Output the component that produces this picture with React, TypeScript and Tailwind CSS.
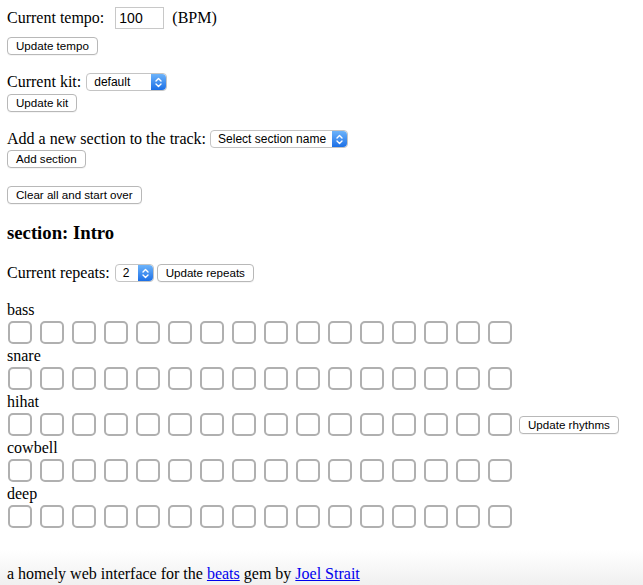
import React from 'react';

const serif = "font-['Liberation_Serif','Times_New_Roman',serif] text-[16px] leading-[18px] text-black";
const btn =
  "block h-[18px] px-[8px] rounded-[4px] border border-[#b8b8b8] bg-white font-['Liberation_Sans',Arial,sans-serif] text-[11.6px] leading-none text-black shadow-[0_1px_0_rgba(0,0,0,0.04)]";

function Stepper() {
  return (
    <span className="flex h-full w-[15px] items-center justify-center rounded-r-[4px] bg-linear-to-b from-[#6cb3fa] to-[#1a6fe6]">
      <svg width="7" height="11" viewBox="0 0 7 11" fill="none" stroke="white" strokeWidth="1.4" strokeLinecap="round" strokeLinejoin="round">
        <path d="M1 4 L3.5 1.5 L6 4" />
        <path d="M1 7 L3.5 9.5 L6 7" />
      </svg>
    </span>
  );
}

function Select({ label, width }: { label: string; width: string }) {
  return (
    <span
      className={`inline-flex h-[18px] items-center justify-between rounded-[4px] border border-[#c4c4c4] bg-white font-['Liberation_Sans',Arial,sans-serif] text-[12px] text-black ${width}`}
    >
      <span className="pl-[7px]">{label}</span>
      <Stepper />
    </span>
  );
}

function Box() {
  return <input type="checkbox" className="h-[23px] w-[24px] appearance-none rounded-[5px] border-2 border-[#b0b0b0] bg-white" />;
}

const tracks = ['bass', 'snare', 'hihat', 'cowbell', 'deep'];

export default function App() {
  return (
    <div className="min-h-screen bg-[linear-gradient(to_bottom,#ffffff_94%,#f0f0f0)] pl-[7px] pt-[7px]">
      <div className="flex h-[22px] items-center">
        <span className={serif}>Current tempo:</span>
        <input
          defaultValue="100"
          className="ml-[11px] h-[22px] w-[49px] border border-[#c8c8c8] pl-[3px] font-['Liberation_Sans',Arial,sans-serif] text-[14px] text-black outline-none"
        />
        <span className={`${serif} ml-[8px]`}>(BPM)</span>
      </div>
      <button className={`${btn} mt-[8px]`}>Update tempo</button>

      <div className="mt-[18px] flex h-[18px] items-center gap-[5px]">
        <span className={serif}>Current kit:</span>
        <Select label="default" width="w-[81px]" />
      </div>
      <button className={`${btn} mt-[3px]`}>Update kit</button>

      <div className="mt-[18px] flex h-[18px] items-center gap-[4px]">
        <span className={serif}>Add a new section to the track:</span>
        <Select label="Select section name" width="w-[138px]" />
      </div>
      <button className={`${btn} mt-[2px]`}>Add section</button>

      <button className={`${btn} mt-[18px]`}>Clear all and start over</button>

      <h3 className="mt-[18px] font-['Liberation_Serif','Times_New_Roman',serif] text-[18.72px] font-bold leading-[22px] text-black">
        section: Intro
      </h3>

      <div className="mt-[20px] flex h-[18px] items-center">
        <span className={serif}>Current repeats:</span>
        <span className="ml-[5px] flex">
          <Select label="2" width="w-[39px]" />
        </span>
        <button className={`${btn} ml-[3px]`}>Update repeats</button>
      </div>

      <div className="mt-[19px]">
        {tracks.map((t) => (
          <div key={t} className="mb-[3px]">
            <div className={serif}>{t}</div>
            <div className="mt-[2px] ml-px flex items-center gap-[8px]">
              {Array.from({ length: 16 }).map((_, i) => (
                <Box key={i} />
              ))}
              {t === 'hihat' && <button className={`${btn} -ml-px`}>Update rhythms</button>}
            </div>
          </div>
        ))}
      </div>

      <p className={`${serif} mt-[37px]`}>
        a homely web interface for the{' '}
        <a href="#" className="text-[#0000ee] underline">
          beats
        </a>{' '}
        gem by{' '}
        <a href="#" className="text-[#0000ee] underline">
          Joel Strait
        </a>
      </p>
    </div>
  );
}
